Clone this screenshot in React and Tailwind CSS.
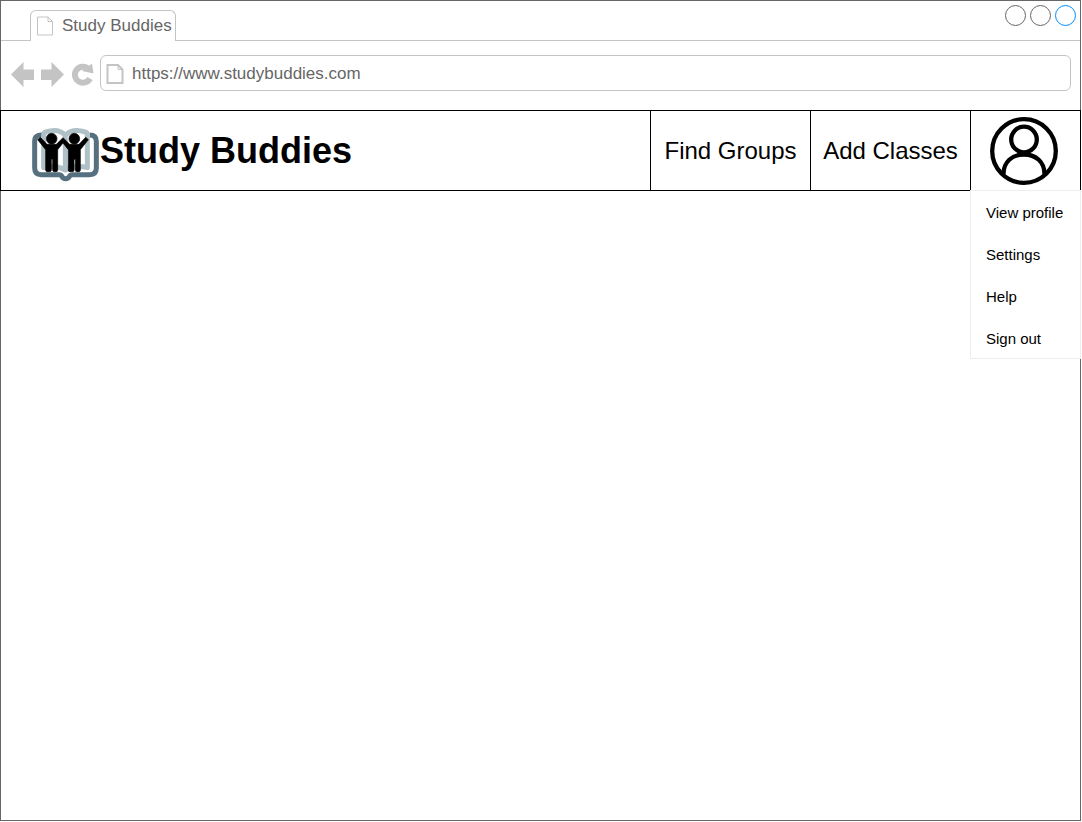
import React from "react";

const menuItems = ["View profile", "Settings", "Help", "Sign out"];

function PageIcon({ className, strokeWidth }) {
  return (
    <svg viewBox="0 0 18 20" className={className} fill="none" stroke="#c4c4c4" strokeWidth={strokeWidth} aria-hidden="true">
      <path d="M1.500 1h10.500l4.500 4.500V19H1.500z" />
      <path d="M12 1v4.500H16.500" strokeWidth="1" />
    </svg>
  );
}

function BookLogo() {
  return (
    <svg viewBox="36 38 204 162" className="h-[54px] w-[68px] shrink-0" fill="none" aria-hidden="true">
      <path
        d="M66 59Q44 58 44 78V158Q44 178 64 178H117Q124 178 126 184Q129 190 137 190Q145 190 148 184Q150 178 157 178H209Q229 178 229 158V78Q229 59 209 59"
        stroke="#56707f"
        strokeWidth="15"
      />
      <path
        d="M71 157V58Q71 52 78 50Q116 38 136 60Q158 38 195 50Q202 52 202 58V157Q164 148 136 164Q108 148 71 157ZM136 60V160"
        stroke="#b0c0c7"
        strokeWidth="15"
        strokeLinejoin="round"
      />
      <g fill="#000" stroke="#000" strokeWidth="2" strokeLinejoin="round">
        <circle cx="95" cy="70" r="16" />
        <circle cx="163" cy="70" r="16" />
        <path d="M61 66L53 73L77 103V165Q77 169 82 169H89Q94 169 94 165V132H98V165Q98 169 103 169H108Q113 169 113 165V103L129 83L145 103V165Q145 169 150 169H157Q162 169 162 165V132H166V165Q166 169 171 169H176Q181 169 181 165V103L205 73L197 66L177 87H149L129 67L109 87H81Z" />
      </g>
    </svg>
  );
}

function UserIcon() {
  return (
    <svg viewBox="0 0 68 68" className="size-[68px]" fill="none" stroke="#000" strokeWidth="4.300" aria-hidden="true">
      <circle cx="34" cy="34" r="31.800" />
      <circle cx="34" cy="22.500" r="12.800" />
      <path d="M13.500 57C13.500 45 22 37.500 34 37.500S54.500 45 54.500 57" />
    </svg>
  );
}

export default function App() {
  return (
    <div className="flex min-h-screen bg-white pr-px pb-px font-['Liberation_Sans',Arial,sans-serif] text-black">
      <div className="flex min-w-0 flex-1 flex-col border border-[#666]">
        <div className="flex h-10">
          <div className="w-[29px] shrink-0 border-b border-[#c4c4c4]" />
          <div className="mt-[9px] flex w-[146px] shrink-0 items-start gap-2 rounded-t-md border border-b-0 border-[#c4c4c4] pt-[5px] pl-[5px] text-[17px] leading-5 whitespace-nowrap text-[#666]">
            <PageIcon className="h-5 w-[18px] shrink-0" strokeWidth="1" />
            <span>Study Buddies</span>
          </div>
          <div className="flex flex-1 items-start justify-end gap-1 border-b border-[#c4c4c4] pt-1 pr-1">
            <button aria-label="Minimize" className="size-[21px] rounded-full border border-[#666]" />
            <button aria-label="Maximize" className="size-[21px] rounded-full border border-[#666]" />
            <button aria-label="Close" className="size-[21px] rounded-full border border-[#008cff]" />
          </div>
        </div>

        <div className="flex h-[69px] items-start pt-[14px] pr-[9px] pl-[10px]">
          <div className="flex h-9 shrink-0 items-center pt-1">
            <button aria-label="Back" className="mr-[7px]">
              <svg viewBox="0 0 23 26" className="h-[26px] w-[23px]" fill="#c4c4c4" aria-hidden="true">
                <path d="M0 12.500L12.500 0V7.500H23V18H12.500V25Z" />
              </svg>
            </button>
            <button aria-label="Forward" className="mr-2">
              <svg viewBox="0 0 23 26" className="h-[26px] w-[23px]" fill="#c4c4c4" aria-hidden="true">
                <path d="M23 12.500L10.500 0V7.500H0V18H10.500V25Z" />
              </svg>
            </button>
            <button aria-label="Reload" className="mr-1.5">
              <svg viewBox="0 0 22 26" className="h-[26px] w-[22px]" aria-hidden="true">
                <path d="M18 16.500A8 8 0 1 1 16 6.500" fill="none" stroke="#c4c4c4" strokeWidth="6" />
                <path d="M20 1.500L21.500 11.500L10 9Z" fill="#c4c4c4" />
              </svg>
            </button>
          </div>
          <div className="flex h-9 min-w-0 flex-1 items-center gap-2 rounded-md border border-[#c4c4c4] pt-px pl-[5px]">
            <PageIcon className="h-5 w-[18px] shrink-0" strokeWidth="2" />
            <input
              aria-label="Address"
              defaultValue="https://www.studybuddies.com"
              className="min-w-0 flex-1 bg-transparent text-[17px] leading-5 text-[#666] outline-none"
            />
          </div>
        </div>

        <header className="-mx-px flex h-[81px] border border-black">
          <div className="flex min-w-0 flex-1 items-center pl-[31px]">
            <div className="shrink-0 pt-2">
              <BookLogo />
            </div>
            <h1 className="text-4xl font-bold whitespace-nowrap">Study Buddies</h1>
          </div>
          <nav className="flex shrink-0 text-2xl">
            <a href="#groups" className="flex w-40 items-center justify-center border-l border-black">Find Groups</a>
            <a href="#classes" className="flex w-40 items-center justify-center border-l border-black">Add Classes</a>
            <div className="relative w-[110px] border-l border-black">
              <button aria-label="Account" aria-expanded="true" className="flex h-full w-full items-center justify-center pr-1">
                <UserIcon />
              </button>
              <ul className="absolute top-full -right-px -left-px h-[169px] border border-[#eee] bg-white text-[15px]">
                {menuItems.map((item) => (
                  <li key={item}>
                    <a href="#menu" className="flex h-[42px] items-center pt-0.5 pl-[15px] whitespace-nowrap">{item}</a>
                  </li>
                ))}
              </ul>
            </div>
          </nav>
        </header>
        <main className="flex-1" />
      </div>
    </div>
  );
}
